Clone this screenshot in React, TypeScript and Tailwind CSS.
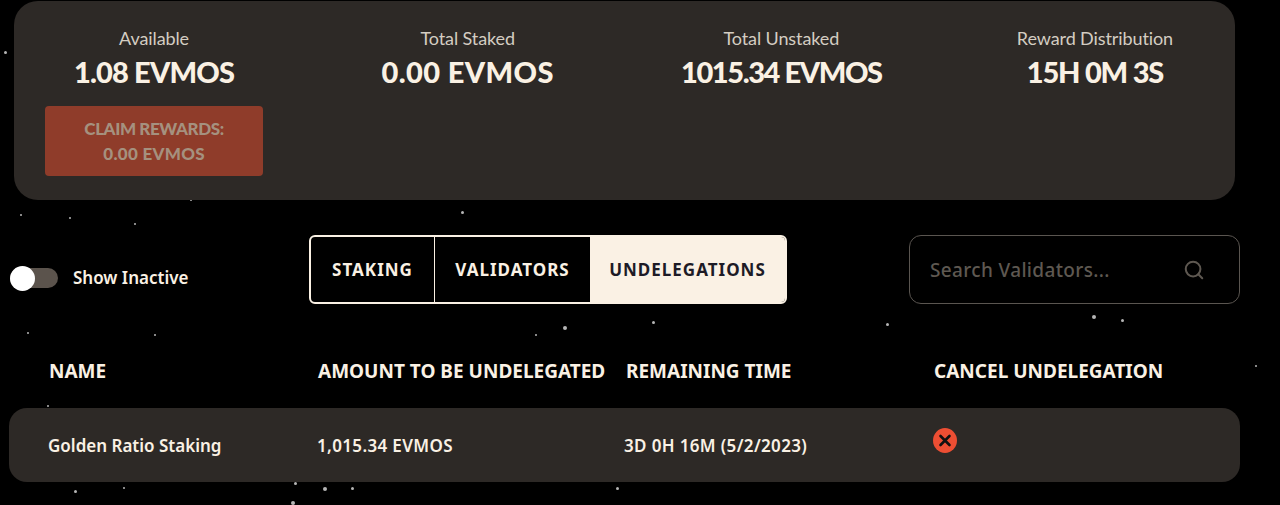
import { Search } from 'lucide-react'

const stars = [
  [5, 52, 3], [21, 215, 2], [70, 218, 2], [135, 224, 2], [191, 200, 2], [462, 212, 3],
  [28, 333, 2], [155, 335, 2], [536, 335, 2], [565, 328, 4], [653, 322, 3], [887, 324, 3],
  [1094, 317, 4], [1122, 320, 3], [1256, 366, 2], [48, 406, 2], [75, 491, 3], [124, 488, 2],
  [295, 483, 3], [325, 489, 4], [352, 488, 3], [293, 503, 4], [617, 488, 3],
]

const stats = [
  { label: 'Available', value: '1.08 EVMOS', fit: 'tracking-[-0.8px]' },
  { label: 'Total Staked', value: '0.00 EVMOS', fit: 'tracking-[0.4px]' },
  { label: 'Total Unstaked', value: '1015.34 EVMOS', fit: 'tracking-[-1.4px]' },
  { label: 'Reward Distribution', value: '15H 0M 3S', fit: 'tracking-[-1.2px]' },
]

const heading = "font-['Lato',sans-serif]"
const plex = "font-['Noto_Sans',sans-serif]"

export default function App() {
  return (
    <div className={`relative h-[505px] w-[1280px] overflow-hidden bg-black text-[#faf1e4] ${plex}`}>
      {stars.map(([x, y, s], i) => (
        <span
          key={i}
          className="absolute rounded-full bg-[#b5b5b5]"
          style={{ left: x - s / 2, top: y - s / 2, width: s, height: s }}
        />
      ))}

      <div className="relative flex flex-col">
        {/* balances */}
        <div className="ml-[14px] mt-px grid h-[199px] w-[1221px] grid-cols-4 gap-x-[95.5px] rounded-[24px] bg-[#2d2926] px-[31px] pt-[26px]">
          {stats.map((s, i) => (
            <div key={s.label} className="flex flex-col items-center">
              <span className={`text-[18px] leading-[22px] tracking-[-0.1px] text-[#d4cdc2] ${heading}`}>{s.label}</span>
              <span className={`mt-[6px] whitespace-nowrap text-[29px] font-black leading-[34px] text-[#faf1e4] ${s.fit} ${heading}`}>{s.value}</span>
              {i === 0 && (
                <button className={`mt-[17px] flex h-[70px] w-[218px] flex-col items-center justify-center rounded-[4px] bg-[#8f3c2a] text-[17px] font-black leading-[25px] text-[#a5917f] ${heading}`}>
                  <span className="tracking-[-0.4px]">CLAIM REWARDS:</span>
                  <span className="tracking-[0.3px]">0.00 EVMOS</span>
                </button>
              )}
            </div>
          ))}
        </div>

        {/* controls */}
        <div className="mt-[35px] flex h-[69px] items-start">
          <div className="ml-[10px] mt-[32px] flex w-[299px] items-center">
            <div className="relative h-[20px] w-[48px] rounded-full bg-[#5b534c]">
              <span className="absolute -top-[2px] left-0 h-[25px] w-[25px] rounded-full bg-white" />
            </div>
            <span className="ml-[15px] text-[17px] font-semibold leading-[22px] text-[#faf1e4]">Show Inactive</span>
          </div>

          <div className="flex h-[69px] w-[478px] overflow-hidden rounded-[6px] border-2 border-[#faf1e4] text-[17px] font-bold tracking-[1px]">
            <div className="flex w-[124px] items-center justify-center border-r border-[#faf1e4]">STAKING</div>
            <div className="flex w-[155px] items-center justify-center">VALIDATORS</div>
            <div className="flex flex-1 items-center justify-center bg-[#faf1e4] text-[#1d1b26]">UNDELEGATIONS</div>
          </div>

          <div className="ml-[122px] flex h-[69px] w-[331px] items-center rounded-[12px] border border-[#5a5550] pl-[20px] pr-[34px]">
            <span className="flex-1 pt-[2px] text-[19px] font-medium tracking-[0.35px] text-[#5e5851]">Search Validators...</span>
            <Search size={22} strokeWidth={2.2} className="text-[#5e5851]" />
          </div>
        </div>

        {/* table */}
        <div className="ml-[49px] mt-[54px] flex h-[26px] items-center text-[19px] font-bold">
          <span className="w-[269px]">NAME</span>
          <span className="w-[308px]">AMOUNT TO BE UNDELEGATED</span>
          <span className="w-[308px]">REMAINING TIME</span>
          <span>CANCEL UNDELEGATION</span>
        </div>

        <div className="ml-[9px] mt-[24px] flex h-[74px] w-[1231px] items-center rounded-[18px] bg-[#2d2926] pl-[39px] text-[17px] font-semibold">
          <span className="w-[269px] pt-[2px]">Golden Ratio Staking</span>
          <span className="w-[307px] pt-[2px] tracking-[0.35px]">1,015.34 EVMOS</span>
          <span className="w-[309px] pt-[2px] tracking-[0.35px]">3D 0H 16M (5/2/2023)</span>
          <svg width="24" height="25" viewBox="0 0 24 25" className="-mt-[10px]">
            <ellipse cx="12" cy="12.5" rx="12" ry="12.5" fill="#ed4e33" />
            <path d="M7.5 8l9 9M16.5 8l-9 9" stroke="#111" strokeWidth="2.6" strokeLinecap="round" />
          </svg>
        </div>
      </div>
    </div>
  )
}
